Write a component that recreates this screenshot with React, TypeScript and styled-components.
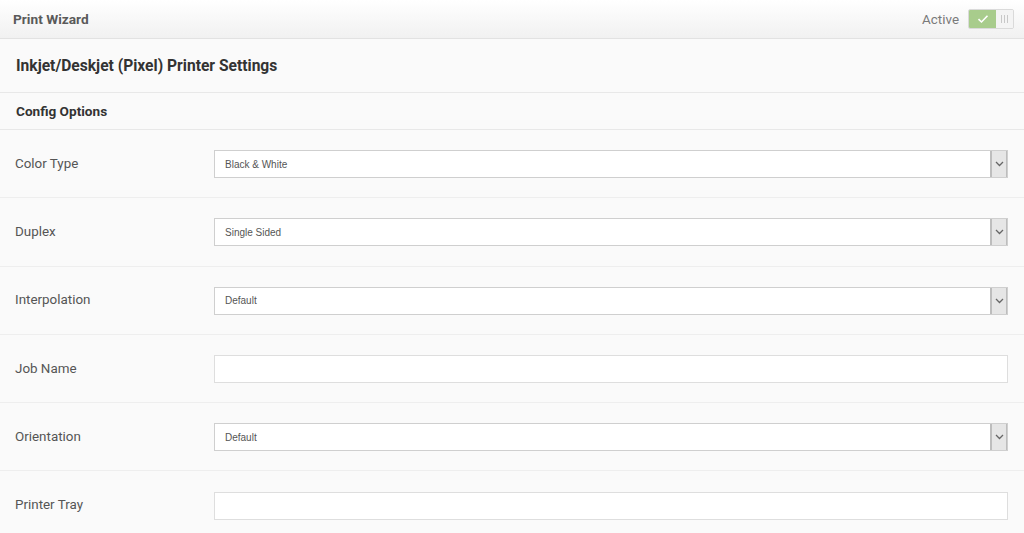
import React from "react";
import styled, { createGlobalStyle } from "styled-components";

type Field = {
  label: string;
  kind: "select" | "text";
  value?: string;
};

const fields: Field[] = [
  { label: "Color Type", kind: "select", value: "Black & White" },
  { label: "Duplex", kind: "select", value: "Single Sided" },
  { label: "Interpolation", kind: "select", value: "Default" },
  { label: "Job Name", kind: "text" },
  { label: "Orientation", kind: "select", value: "Default" },
  { label: "Printer Tray", kind: "text" },
];

const GlobalStyle = createGlobalStyle`
  html, body {
    margin: 0;
    padding: 0;
    background: #fafafa;
    font-family: Roboto, "Liberation Sans", Arial, sans-serif;
    overflow: hidden;
  }
  * { box-sizing: border-box; }
`;

function App() {
  return (
    <Page>
      <GlobalStyle />
      <TopBar>
        <TopTitle>Print Wizard</TopTitle>
        <ActiveWrap>
          <ActiveLabel>Active</ActiveLabel>
          <Toggle>
            <ToggleOn>
              <svg width="12" height="10" viewBox="0 0 12 10">
                <path
                  d="M1.5 5.2 L4.5 8 L10.5 1.8"
                  fill="none"
                  stroke="#fff"
                  strokeWidth="1.6"
                />
              </svg>
            </ToggleOn>
            <ToggleOff>
              <Grip />
              <Grip />
              <Grip />
            </ToggleOff>
          </Toggle>
        </ActiveWrap>
      </TopBar>
      <SectionHead>Inkjet/Deskjet (Pixel) Printer Settings</SectionHead>
      <SubHead>Config Options</SubHead>
      {fields.map((f) => (
        <Row key={f.label}>
          <Label>{f.label}</Label>
          {f.kind === "select" ? (
            <SelectBox>
              <SelectValue>{f.value}</SelectValue>
              <SelectButton>
                <svg width="9" height="6" viewBox="0 0 9 6">
                  <path
                    d="M1 1 L4.5 4.5 L8 1"
                    fill="none"
                    stroke="#666"
                    strokeWidth="1.3"
                  />
                </svg>
              </SelectButton>
            </SelectBox>
          ) : (
            <TextBox />
          )}
        </Row>
      ))}
    </Page>
  );
}

export default App;

const Page = styled.div`
  width: 1024px;
  height: 533px;
  background: #fafafa;
  overflow: hidden;
`;

const TopBar = styled.div`
  height: 39px;
  display: flex;
  align-items: center;
  justify-content: space-between;
  padding: 0 10px 0 13px;
  background: linear-gradient(#ffffff, #f1f1f1);
  border-bottom: 1px solid #e2e2e2;
`;

const TopTitle = styled.div`
  font-size: 13.7px;
  font-weight: 700;
  color: #5a5a5a;
  margin-top: -1px;
`;

const ActiveWrap = styled.div`
  display: flex;
  align-items: center;
  gap: 9px;
`;

const ActiveLabel = styled.span`
  font-size: 13.4px;
  color: #7a7a7a;
`;

const Toggle = styled.div`
  display: flex;
  width: 46px;
  height: 20px;
  border: 1px solid #dadada;
  border-radius: 2px;
  overflow: hidden;
`;

const ToggleOn = styled.div`
  width: 27px;
  background: #a8cc8c;
  display: flex;
  align-items: center;
  justify-content: center;
`;

const ToggleOff = styled.div`
  flex: 1;
  background: #f4f4f4;
  display: flex;
  align-items: center;
  justify-content: center;
  gap: 2px;
`;

const Grip = styled.span`
  width: 1px;
  height: 8px;
  background: #c8c8c8;
`;

const SectionHead = styled.div`
  height: 54px;
  display: flex;
  align-items: center;
  padding: 0 16px;
  font-size: 15.6px;
  font-weight: 700;
  color: #333;
  border-bottom: 1px solid #e8e8e8;
`;

const SubHead = styled.div`
  height: 37px;
  display: flex;
  align-items: center;
  padding: 0 16px;
  font-size: 13.6px;
  font-weight: 700;
  color: #333;
  border-bottom: 1px solid #e8e8e8;
`;

const Row = styled.div`
  display: grid;
  grid-template-columns: 199px 1fr;
  align-items: center;
  height: 68.3px;
  padding: 0 16px 0 15px;
  border-bottom: 1px solid #eeeeee;
`;

const Label = styled.div`
  font-size: 13.4px;
  color: #555;
  margin-top: -1px;
`;

const SelectBox = styled.div`
  height: 28px;
  display: flex;
  align-items: stretch;
  background: #fff;
  border: 1px solid #cfcfcf;
  margin-top: 1px;
`;

const SelectValue = styled.div`
  flex: 1;
  display: flex;
  align-items: center;
  padding-left: 10px;
  font-family: "Liberation Sans", Arial, sans-serif;
  font-size: 10px;
  color: #555;
`;

const SelectButton = styled.div`
  width: 17px;
  display: flex;
  align-items: center;
  justify-content: center;
  background: #e6e6e6;
  border-left: 2px solid #bdbdbd;
  border-right: 1px solid #bdbdbd;
`;

const TextBox = styled.div`
  height: 28px;
  background: #fff;
  border: 1px solid #dedede;
  margin-top: 1px;
`;
